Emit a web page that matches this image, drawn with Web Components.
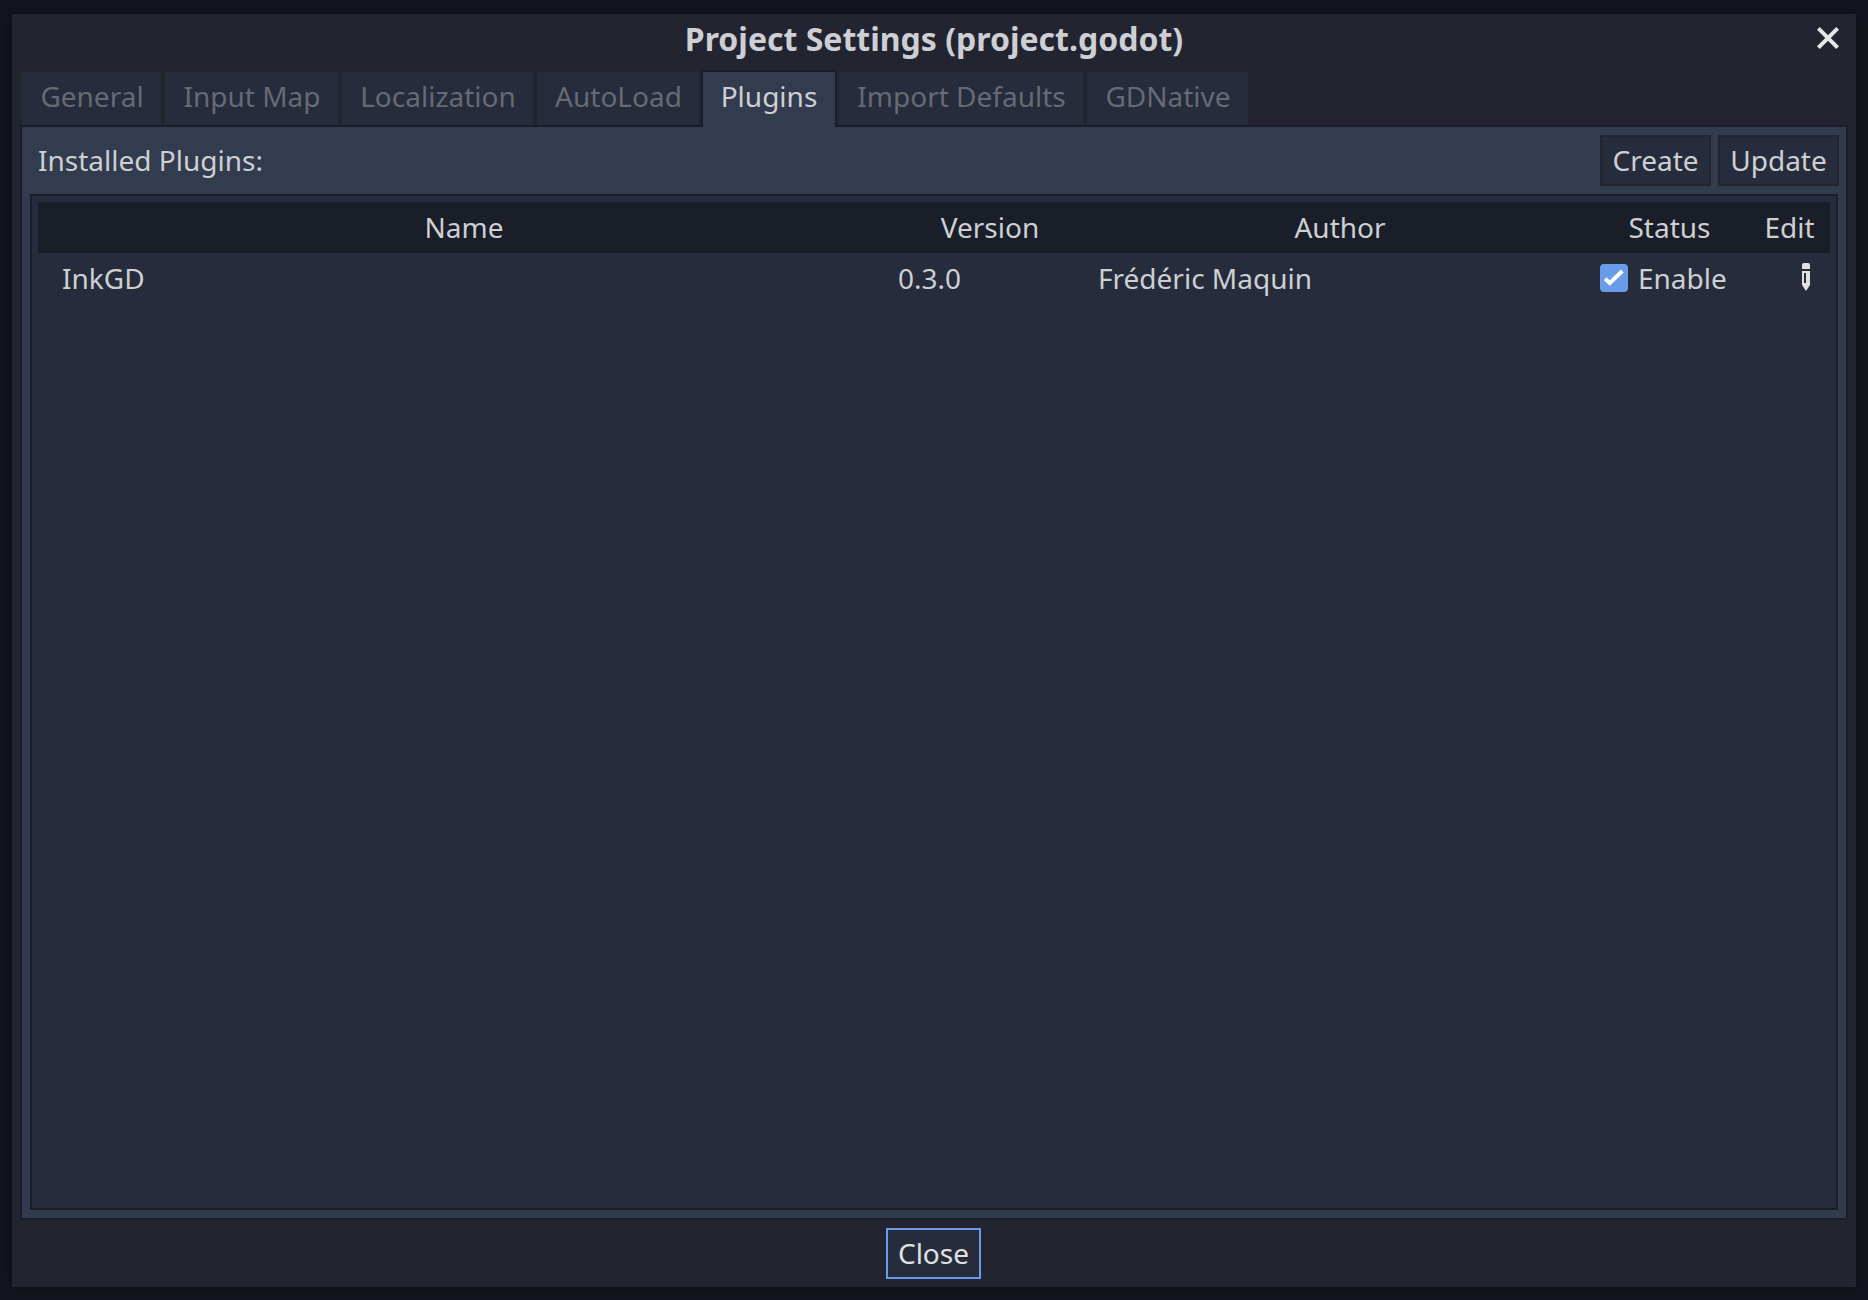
<!DOCTYPE html>
<html lang="en">
<head>
<meta charset="utf-8">
<title>Project Settings (project.godot)</title>
<style>
html, body { margin: 0; height: 100%; }
body {
  --window: #222530; --tab: #262c3b; --panel: #333b4e; --line: #1a1e28; --accent: #699ce8;
  box-sizing: border-box; height: 1300px; width: 1868px; padding: 14px 12px 13px; overflow: hidden;
  background: #13161f; color: #cdcfd4;
  font: 28px/38px "Noto Sans", sans-serif;
}
</style>
</head>
<body>
<settings-window heading="Project Settings (project.godot)">
  <tab-strip slot="tabs">
    <tab-item style="width:139px">General</tab-item>
    <tab-item style="width:173px">Input Map</tab-item>
    <tab-item style="width:191px">Localization</tab-item>
    <tab-item style="width:162px">AutoLoad</tab-item>
    <tab-item style="width:132px" active>Plugins</tab-item>
    <tab-item style="width:244px">Import Defaults</tab-item>
    <tab-item style="width:161px">GDNative</tab-item>
  </tab-strip>
  <plugin-panel>
    <span slot="label">Installed Plugins:</span>
    <push-button slot="actions" style="width:111px">Create</push-button>
    <push-button slot="actions" style="width:121px">Update</push-button>
    <plugin-table>
      <plugin-row name="InkGD" version="0.3.0" author="Frédéric Maquin" status="Enable"></plugin-row>
    </plugin-table>
  </plugin-panel>
  <push-button slot="footer" focused style="width:95px">Close</push-button>
</settings-window>
<script>
const define = (tag, html) => {
  customElements.define(tag, class extends HTMLElement {
    constructor() {
      super();
      const t = document.createElement('template');
      t.innerHTML = html;
      this.attachShadow({ mode: 'open' }).append(t.content.cloneNode(true));
    }
    connectedCallback() {
      this.shadowRoot.querySelectorAll('[data-text]').forEach(n => {
        n.textContent = this.getAttribute(n.dataset.text);
      });
    }
  });
};

define('close-icon', `<style>:host{display:block;width:24px;height:24px}svg{display:block}</style>
<svg width="24" height="24" viewBox="0 0 24 24"><path d="M2.4 2.4 21.6 21.6M21.6 2.4 2.4 21.6" stroke="#e7e7e8" stroke-width="4" fill="none"/></svg>`);

define('check-icon', `<style>:host{display:block;width:28px;height:28px}svg{display:block}</style>
<svg width="28" height="28" viewBox="0 0 28 28"><rect width="28" height="28" rx="4" fill="#699ce8"/><path d="M5.2 14.8 9.8 19.1 22.3 7" stroke="#fff" stroke-width="4" fill="none"/></svg>`);

define('pencil-icon', `<style>:host{display:block;width:8px;height:28px}svg{display:block}</style>
<svg width="8" height="28" viewBox="0 0 8 28"><path fill="#e0e0e0" fill-rule="evenodd" d="M2 0H6A2 2 0 0 1 8 2V6H0V2A2 2 0 0 1 2 0ZM0 8H8V22L4 28 0 22ZM2 10V20H4V10Z"/></svg>`);

define('push-button', `<style>
:host{display:flex;box-sizing:border-box;height:51px;padding-bottom:1px;justify-content:center;align-items:center;border:2px solid var(--window);background:var(--tab)}
:host([focused]){border-color:var(--accent);color:#e0e1e4}
</style><slot></slot>`);

define('tab-item', `<style>
:host{display:flex;box-sizing:border-box;height:53px;padding:5px 0 0 1px;justify-content:center;align-items:flex-start;background:var(--tab);color:#666a74}
:host([active]){box-sizing:content-box;height:50px;padding-left:0;margin:-2px -2px 0;border:2px solid var(--line);border-bottom:0;background:var(--panel);color:inherit;position:relative}
:host([active])::after{content:"";position:absolute;left:0;right:0;bottom:-2px;height:4px;background:var(--panel)}
</style><slot></slot>`);

define('tab-strip', `<style>:host{display:flex;gap:4px;height:53px;padding-left:2px}</style><slot></slot>`);

define('plugin-row', `<style>
:host{display:grid;grid-template-columns:851px 200px 500px 160px 81px;height:50px;align-items:center}
span{padding-left:9px}.name{padding-left:24px}
.status{display:flex;align-items:center;padding-left:11px}
.status span{padding-left:10px}
pencil-icon{justify-self:end;margin-right:20px;margin-top:-2px}
</style>
<span class="name" data-text="name"></span><span data-text="version"></span><span data-text="author"></span>
<div class="status"><check-icon></check-icon><span data-text="status"></span></div><pencil-icon></pencil-icon>`);

define('plugin-table', `<style>
:host{display:flex;flex-direction:column;box-sizing:border-box;flex:1;border:2px solid var(--line);background:var(--tab);padding:6px}
header{display:grid;grid-template-columns:852px 200px 500px 159px 81px;box-sizing:border-box;height:51px;padding-bottom:1px;align-items:center;text-align:center;background:var(--line)}
</style>
<header><span>Name</span><span>Version</span><span>Author</span><span>Status</span><span>Edit</span></header><slot></slot>`);

define('plugin-panel', `<style>
:host{display:flex;flex-direction:column;flex:1;box-sizing:border-box;border:2px solid var(--line);background:var(--panel);padding:8px}
.bar{display:flex;height:51px;align-items:center;gap:7px;margin:0 -1px 8px 0;padding-left:8px}
.label{flex:1;padding-bottom:1px}
</style>
<div class="bar"><div class="label"><slot name="label"></slot></div><slot name="actions"></slot></div><slot></slot>`);

define('settings-window', `<style>
:host{display:flex;flex-direction:column;box-sizing:border-box;height:1273px;padding:0 8px 8px;background:var(--window);box-shadow:0 1px 9px 1px #0d0f12}
.title{display:grid;grid-template-columns:1fr auto 1fr;height:58px}
h1{margin:3px 0 0;font-size:32px;line-height:44px;font-weight:700}
close-icon{grid-column:3;justify-self:end;margin:12px 8px 0 0}
footer{display:flex;justify-content:center;margin-top:8px;padding-right:1px}
</style>
<div class="title"><i></i><h1 data-text="heading"></h1><close-icon></close-icon></div>
<slot name="tabs"></slot><slot></slot><footer><slot name="footer"></slot></footer>`);
</script>
</body>
</html>
